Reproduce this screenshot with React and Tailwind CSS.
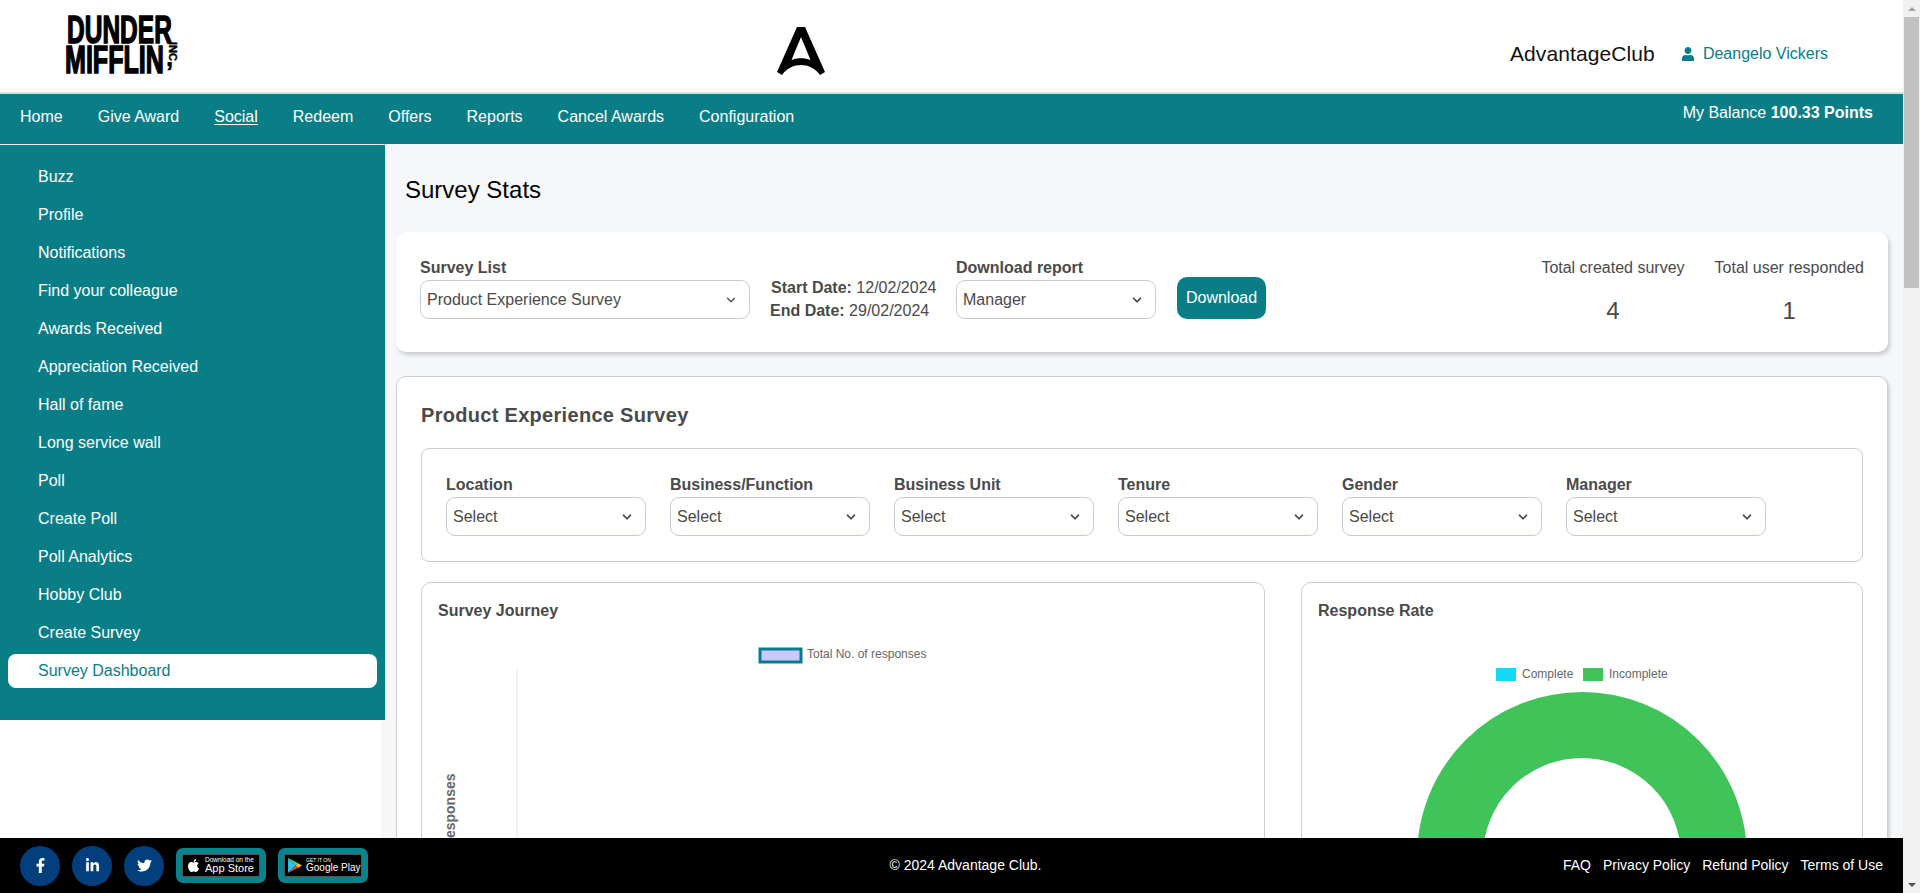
import React from 'react';
import { ChevronDown } from 'lucide-react';
import { FaApple, FaFacebookF, FaLinkedinIn, FaTwitter, FaUser } from 'react-icons/fa';

const NAV_ITEMS = ['Home', 'Give Award', 'Social', 'Redeem', 'Offers', 'Reports', 'Cancel Awards', 'Configuration'];
const SIDE_ITEMS = [
  'Buzz', 'Profile', 'Notifications', 'Find your colleague', 'Awards Received', 'Appreciation Received',
  'Hall of fame', 'Long service wall', 'Poll', 'Create Poll', 'Poll Analytics', 'Hobby Club', 'Create Survey',
  'Survey Dashboard',
];
const FILTERS = ['Location', 'Business/Function', 'Business Unit', 'Tenure', 'Gender', 'Manager'];
const SOCIALS = [FaFacebookF, FaLinkedinIn, FaTwitter];

const SelectBox = ({ value, width, thin }) => (
  <div className={`${width} h-[39px] flex items-center justify-between pl-[6px] pr-[11px] bg-white border border-[#c5cbd5] rounded-[9px] text-[16px] text-[#4a4a4a]`}>
    <span>{value}</span>
    <ChevronDown size={14} strokeWidth={thin ? 2 : 3} className="text-[#444]" />
  </div>
);

const Header = () => (
  <header className="h-[94px] shrink-0 flex items-center bg-white border-b-2 border-[#ddd]">
    <div className="relative w-[712px] ml-[65px] text-black font-bold text-[38px] leading-[30px] pb-[2px] [-webkit-text-stroke:1.5px_black]">
      <div className="origin-left scale-x-[.645] ml-[2px]">DUNDER</div>
      <div className="origin-left scale-x-[.66]">MIFFLIN</div>
      <span className="absolute left-[102px] top-[27px] text-[11px] leading-[12px] [writing-mode:vertical-rl] [-webkit-text-stroke:0.4px_black]">INC</span>
      <span className="absolute left-[101px] top-[27px] text-[26px] leading-[30px] [-webkit-text-stroke:0.5px_black]">,</span>
    </div>
    <svg width="48" height="48" viewBox="0 0 48 48" className="shrink-0 mt-[10px]">
      <path fillRule="evenodd" fill="#000" d="M20 0h8L48 45l-5 3C38 41 31 38 24 38S10 41 5 48L0 45ZM24 10 14.5 33C20 30.5 28 30.5 33.5 33Z" />
    </svg>
    <div className="ml-auto mr-[75px] mt-[16px] flex items-center">
      <span className="text-[21px] text-[#111] tracking-[.1px]">AdvantageClub</span>
      <FaUser size={14} className="ml-[26px] text-[#097e87]" />
      <span className="ml-[8px] text-[16px] text-[#097e87]">Deangelo Vickers</span>
    </div>
  </header>
);

const TopNav = () => (
  <nav className="h-[50px] shrink-0 flex justify-between bg-[#097e87] text-white text-[16px] pl-[20px] pr-[30px]">
    <div className="flex gap-[35px] items-center pb-[4px]">
      {NAV_ITEMS.map(item => (
        <a key={item} className={item === 'Social' ? 'underline underline-offset-2' : ''}>{item}</a>
      ))}
    </div>
    <div className="pt-[7px]">My Balance <span className="font-bold">100.33 Points</span></div>
  </nav>
);

const Sidebar = () => (
  <aside className="w-[381px] shrink-0 bg-white">
    <div className="w-[385px] relative z-10 h-[576px] bg-[#097e87] border-t border-[#e8f0f0] pt-[15px] flex flex-col gap-[4px] text-white text-[16px]">
      {SIDE_ITEMS.map(item => (
        <div
          key={item}
          className={`h-[34px] ml-[8px] mr-[8px] pl-[30px] flex items-center rounded-[8px] ${
            item === 'Survey Dashboard' ? 'bg-white text-[#097e87]' : ''
          }`}
        >
          {item}
        </div>
      ))}
    </div>
  </aside>
);

const SummaryCard = () => (
  <section className="h-[120px] flex bg-white rounded-[10px] shadow-[2px_3px_4px_rgba(0,0,0,0.18)] pl-[24px] pr-[24px] pt-[25px] text-[16px] text-[#4a4a4a]">
    <div>
      <div className="font-bold leading-[22px] mb-[1px]">Survey List</div>
      <SelectBox value="Product Experience Survey" width="w-[330px]" thin />
    </div>
    <div className="ml-[20px] w-[166px] pt-[19px] leading-[23px] whitespace-nowrap">
      <div className="pl-[1px]"><span className="font-bold">Start Date:</span> 12/02/2024</div>
      <div><span className="font-bold">End Date:</span> 29/02/2024</div>
    </div>
    <div className="ml-[20px]">
      <div className="font-bold leading-[22px] mb-[1px]">Download report</div>
      <SelectBox value="Manager" width="w-[200px]" />
    </div>
    <button className="ml-[21px] mt-[20px] w-[89px] h-[42px] bg-[#097e87] text-white rounded-[10px]">Download</button>
    <div className="ml-auto flex gap-[30px] text-center">
      <div>
        <div className="leading-[22px]">Total created survey</div>
        <div className="mt-[18px] text-[24px] leading-[28px]">4</div>
      </div>
      <div>
        <div className="leading-[22px]">Total user responded</div>
        <div className="mt-[18px] text-[24px] leading-[28px]">1</div>
      </div>
    </div>
  </section>
);

const FilterBar = () => (
  <div className="h-[114px] border border-[#ccc] rounded-[8px] pl-[24px] pt-[25px] flex gap-[24px] text-[#4a4a4a]">
    {FILTERS.map(label => (
      <div key={label}>
        <div className="font-bold text-[16px] leading-[22px] mb-[1px]">{label}</div>
        <SelectBox value="Select" width="w-[200px]" />
      </div>
    ))}
  </div>
);

const JourneyChart = () => (
  <svg width="842" height="300" className="block">
    <rect x="338" y="17" width="41" height="13" fill="#c9c9ff" stroke="#0b7a8f" strokeWidth="3" />
    <text x="385" y="26" fontSize="12" fill="#666">Total No. of responses</text>
    <line x1="95" y1="38" x2="95" y2="300" stroke="#e5e5e5" />
    <text transform="translate(33,141.5) rotate(-90)" textAnchor="end" fontSize="14" fontWeight="700" fill="#666">No. of responses</text>
  </svg>
);

const DonutChart = () => (
  <svg width="560" height="300" className="block">
    <rect x="194" y="36" width="20" height="13" fill="#14d8f5" />
    <text x="220" y="46" fontSize="12" fill="#666">Complete</text>
    <rect x="281" y="36" width="20" height="13" fill="#40c45a" />
    <text x="307" y="46" fontSize="12" fill="#666">Incomplete</text>
    <circle cx="280" cy="225" r="132" fill="none" stroke="#40c45a" strokeWidth="66" />
  </svg>
);

const ChartCard = ({ title, width, children }) => (
  <div className={`${width} h-[340px] shrink-0 bg-white border border-[#ccc] rounded-[10px]`}>
    <h3 className="font-bold text-[16px] leading-[20px] text-[#4a4a4a] mt-[18px] ml-[16px] mb-[11px]">{title}</h3>
    {children}
  </div>
);

const SurveyCard = () => (
  <section className="mt-[24px] h-[560px] bg-white border border-[#ccc] rounded-[10px] shadow-[2px_2px_3px_rgba(0,0,0,0.15)] px-[24px]">
    <h2 className="mt-[26px] mb-[21px] font-bold text-[20px] leading-[24px] tracking-[.3px] text-[#4a4a4a]">Product Experience Survey</h2>
    <FilterBar />
    <div className="mt-[20px] flex justify-between">
      <ChartCard title="Survey Journey" width="w-[844px]"><JourneyChart /></ChartCard>
      <ChartCard title="Response Rate" width="w-[562px]"><DonutChart /></ChartCard>
    </div>
  </section>
);

const StoreBadge = ({ children }) => (
  <div className="w-[90px] h-[35px] p-[6px] bg-[#0a838c] rounded-[7px]">
    <div className="h-full flex items-center gap-[4px] pl-[3px] bg-black border border-[#555] rounded-[2px] text-white whitespace-nowrap">
      {children}
    </div>
  </div>
);

const Footer = () => (
  <footer className="h-[55px] shrink-0 flex items-center justify-between bg-black text-white text-[14px] pl-[20px] pr-[20px]">
    <div className="flex items-center gap-[12px]">
      {SOCIALS.map((Icon, i) => (
        <div key={i} className="w-[40px] h-[40px] flex items-center justify-center rounded-full bg-[#023f7c]">
          <Icon size={15} />
        </div>
      ))}
      <StoreBadge>
        <FaApple size={15} />
        <div className="leading-none">
          <div className="text-[6.5px]">Download on the</div>
          <div className="text-[11px]">App Store</div>
        </div>
      </StoreBadge>
      <StoreBadge>
        <svg width="14" height="15" viewBox="0 0 13 14">
          <path d="M0 0 7 7 0 14Z" fill="#2bc4f3" />
          <path d="M0 0 9.5 5 7 7Z" fill="#3ddc84" />
          <path d="M0 14 9.5 9 7 7Z" fill="#ea4335" />
          <path d="M9.5 5 13 7 9.5 9 7 7Z" fill="#fbbc04" />
        </svg>
        <div className="leading-none">
          <div className="text-[5px]">GET IT ON</div>
          <div className="text-[10px]">Google Play</div>
        </div>
      </StoreBadge>
    </div>
    <div>© 2024 Advantage Club.</div>
    <div className="flex gap-[12px]">
      <a>FAQ</a>
      <a>Privacy Policy</a>
      <a>Refund Policy</a>
      <a>Terms of Use</a>
    </div>
  </footer>
);

const ScrollTrack = () => (
  <div className="w-[17px] shrink-0 flex flex-col items-center bg-[#f1f1f1]">
    <div className="h-[17px] flex items-center justify-center">
      <div className="w-0 h-0 border-x-[4px] border-x-transparent border-b-[4px] border-b-[#a3a3a3]" />
    </div>
    <div className="w-[15px] h-[271px] bg-[#c1c1c1]" />
    <div className="flex-1" />
    <div className="h-[17px] flex items-center justify-center">
      <div className="w-0 h-0 border-x-[4px] border-x-transparent border-t-[4px] border-t-[#505050]" />
    </div>
  </div>
);

export default function App() {
  return (
    <div className="w-[1920px] h-[893px] flex overflow-hidden font-['Liberation_Sans',Arial,sans-serif]">
      <div className="flex-1 min-w-0 flex flex-col">
        <Header />
        <TopNav />
        <div className="flex-1 min-h-0 flex overflow-hidden">
          <Sidebar />
          <main className="flex-1 min-w-0 bg-[#f6f7f9] px-[15px]">
            <h1 className="mt-[32px] mb-[29px] pl-[9px] text-[24px] leading-[27px] text-black">Survey Stats</h1>
            <SummaryCard />
            <SurveyCard />
          </main>
        </div>
        <Footer />
      </div>
      <ScrollTrack />
    </div>
  );
}
